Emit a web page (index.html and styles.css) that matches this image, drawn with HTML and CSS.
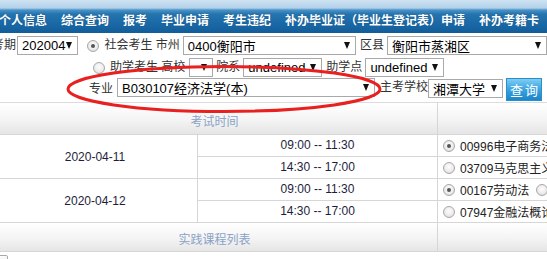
FILE: index.html
```html
<!DOCTYPE html>
<html>
<head>
    <meta charset="utf-8">
    <title>考试安排查询</title>
    <link rel="stylesheet" href="styles.css">
</head>
<body>
    <div class="nav">
        <span class="nav-item first">个人信息</span>
        <span class="nav-item">综合查询</span>
        <span class="nav-item">报考</span>
        <span class="nav-item">毕业申请</span>
        <span class="nav-item">考生违纪</span>
        <span class="nav-item">补办毕业证（毕业生登记表）申请</span>
        <span class="nav-item">补办考籍卡</span>
    </div>

    <div class="filter">
        <div class="row row1">
            <span class="label term">考期</span>
            <span class="select sel-term"><span class="val">202004</span><i class="arrow"></i></span>
            <span class="radio checked r1"></span>
            <span class="label gap5">社会考生 市州</span>
            <span class="select sel-city"><span class="val">0400衡阳市</span><i class="arrow"></i></span>
            <span class="label gap4">区县</span>
            <span class="select sel-county"><span class="val">衡阳市蒸湘区</span><i class="arrow"></i></span>
        </div>
        <div class="row row2">
            <span class="radio r2"></span>
            <span class="label gap5">助学考生 高校</span>
            <span class="select sel-school gap4"><span class="val"></span><i class="arrow"></i></span>
            <span class="label gap3">院系</span>
            <span class="select sel-undef"><span class="val">undefined</span><i class="arrow"></i></span>
            <span class="label gap4">助学点</span>
            <span class="select sel-undef"><span class="val">undefined</span><i class="arrow"></i></span>
        </div>
        <div class="row row3">
            <span class="label major">专业</span>
            <span class="select sel-major"><span class="val">B030107经济法学(本)</span><i class="arrow"></i></span>
            <span class="label gap5">主考学校</span>
            <span class="select sel-main"><span class="val">湘潭大学</span><i class="arrow"></i></span>
            <button class="btn-query">查询</button>
        </div>
    </div>

    <div class="exam">
        <div class="head span2">考试时间</div>
        <div class="head"></div>

        <div class="date">2020-04-11</div>
        <div class="time">09:00 -- 11:30</div>
        <div class="course"><span class="radio checked"></span>00996电子商务法概论</div>
        <div class="time">14:30 -- 17:00</div>
        <div class="course"><span class="radio"></span>03709马克思主义基本原理概论</div>

        <div class="date">2020-04-12</div>
        <div class="time">09:00 -- 11:30</div>
        <div class="course"><span class="radio checked"></span>00167劳动法<span class="radio gap7"></span>00230合同法</div>
        <div class="time">14:30 -- 17:00</div>
        <div class="course"><span class="radio"></span>07947金融法概论</div>

        <div class="head span2 head2">实践课程列表</div>
        <div class="head head2"></div>

        <div class="practice"><span class="check"></span><span class="practice-name">计算机应用技术(实践)</span></div>
    </div>

    <svg class="mark" width="547" height="259" viewBox="0 0 547 259">
        <ellipse cx="224" cy="89" rx="156" ry="22.5" fill="none" stroke="#e8201f" stroke-width="3"/>
    </svg>
</body>
</html>
```

FILE: styles.css
```css
body {
    margin: 0;
    width: 547px;
    height: 259px;
    overflow: hidden;
    position: relative;
    background: #fff;
    font-family: "Liberation Sans", "Noto Sans CJK SC", sans-serif;
    font-size: 12px;
    color: #333;
}

/* 顶部导航 */
.nav {
    height: 33px;
    padding-top: 6px;
    box-sizing: border-box;
    display: flex;
    align-items: center;
    gap: 14px;
    white-space: nowrap;
    background: linear-gradient(to bottom, #cfe3f2 0, #b2d1e9 8px, #4a92c6 10px, #2474af 14px, #1968a5 24px, #125d9a 33px);
}
.nav-item {
    color: #fff;
    font-weight: bold;
    font-size: 12px;
    text-shadow: 0 0 1px rgba(0, 40, 90, 0.5);
}
.nav-item.first {
    margin-left: -1px;
}

/* 查询条件 */
.filter {
    height: 70px;
    padding-top: 3px;
    box-sizing: border-box;
    border-bottom: 1px solid #dcdcdc;
    white-space: nowrap;
}
.row {
    display: flex;
    align-items: center;
}
.row1 {
    height: 19px;
}
.row2 {
    height: 19px;
    margin-top: 3px;
}
.row3 {
    height: 24px;
    margin-top: 1px;
    align-items: flex-start;
}
.label {
    line-height: 19px;
    color: #333;
}
.term {
    width: 24px;
    margin-left: -8px;
}
.major {
    margin-left: 89px;
    margin-top: 2px;
}
.gap3 { margin-left: 3px; }
.gap4 { margin-left: 4px; }
.gap5 { margin-left: 5px; }
.gap7 { margin-left: 7px; }

.select {
    height: 19px;
    box-sizing: border-box;
    border: 1px solid #a9a9a9;
    background: #fff;
    display: flex;
    align-items: center;
    padding-left: 4px;
    font-size: 13px;
    color: #000;
    overflow: hidden;
}
.select .val {
    flex: 1;
}
.arrow {
    width: 0;
    height: 0;
    border-left: 3.5px solid transparent;
    border-right: 3.5px solid transparent;
    border-top: 7px solid #111;
    margin-right: 5px;
    flex: none;
}
.sel-term { width: 65px; margin-left: 1px; }
.sel-city { width: 184px; margin-left: 3px; }
.sel-county { width: 160px; margin-left: 3px; flex: none; }
.sel-school { width: 24px; }
.sel-undef { width: 79px; margin-left: 3px; }
.sel-major { width: 258px; margin-left: 4px; }
.sel-main { width: 75px; margin-top: 1px; }

.radio {
    display: inline-block;
    width: 12px;
    height: 12px;
    box-sizing: border-box;
    border: 1px solid #a8a8a8;
    border-radius: 50%;
    background: radial-gradient(circle at 50% 40%, #fdfdfd 0, #ececec 55%, #d2d2d2 100%);
    position: relative;
    flex: none;
}
.radio.checked::after {
    content: "";
    position: absolute;
    left: 3px;
    top: 3px;
    width: 4px;
    height: 4px;
    border-radius: 50%;
    background: #555;
}
.r1 { margin-left: 9px; }
.r2 { margin-left: 93px; }

.btn-query {
    width: 36px;
    height: 23px;
    margin-left: 3px;
    padding: 0;
    border: 1px solid #2a8fce;
    background: linear-gradient(to bottom, #7dcdf3, #3aa3de 50%, #1b86c9);
    color: #fff;
    font-family: "Liberation Sans", "Noto Sans CJK SC", sans-serif;
    font-size: 13px;
    letter-spacing: 2px;
    text-indent: 2px;
}

/* 考试时间表 */
.exam {
    display: grid;
    grid-template-columns: 206px 240px 1fr;
    width: 555px;
    margin-left: -8px;
    color: #1e1e3c;
}
.exam > div {
    box-sizing: border-box;
}
.head {
    height: 32px;
    padding-top: 9px;
    text-align: center;
    color: #8aa3c6;
    font-size: 12px;
    border-bottom: 1px solid #d6d6d6;
    background: linear-gradient(to bottom, #ffffff, #f4f4f4 55%, #e5e5e5);
}
.head.span2 {
    grid-column: span 2;
    border-right: 1px solid #d6d6d6;
}
.head2 {
    height: 29px;
    padding-top: 7px;
}
.date {
    grid-row: span 2;
    height: 44px;
    display: flex;
    align-items: center;
    justify-content: center;
    border-right: 1px solid #d6d6d6;
    border-bottom: 1px solid #d6d6d6;
    padding-left: 1px;
}
.time {
    height: 22px;
    line-height: 21px;
    text-align: center;
    border-right: 1px solid #d6d6d6;
    border-bottom: 1px solid #d6d6d6;
}
.course {
    height: 22px;
    display: flex;
    align-items: center;
    gap: 5px;
    padding-left: 5px;
    white-space: nowrap;
    overflow: hidden;
    color: #222;
    border-bottom: 1px solid #d6d6d6;
}
.course .gap7 {
    margin-left: 2px;
}
.practice {
    grid-column: 1 / -1;
    display: flex;
    align-items: flex-start;
    padding-top: 3px;
    padding-left: 3px;
}
.check {
    width: 13px;
    height: 13px;
    box-sizing: border-box;
    border: 1px solid #a8a8a8;
    border-radius: 2px;
    background: linear-gradient(#fdfdfd, #dedede);
}
.practice-name {
    margin-left: 47px;
    margin-top: 3px;
    color: #222;
}

/* 标注 */
.mark {
    position: absolute;
    left: 0;
    top: 0;
    pointer-events: none;
}
```
